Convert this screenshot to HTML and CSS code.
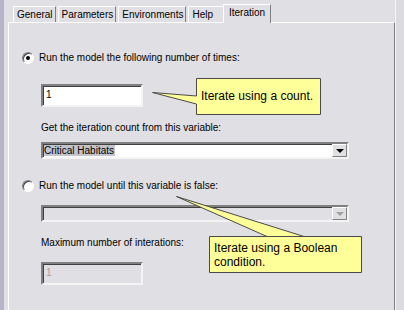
FILE: index.html
```html
<!DOCTYPE html>
<html lang="en">
<head>
    <meta charset="UTF-8">
    <title>Iteration</title>
    <link rel="stylesheet" href="styles.css">
</head>
<body>
    <div class="window">
        <div class="edge"></div>
        <div class="dialog">
            <div class="tabs">
                <div class="tab">General</div>
                <div class="tab">Parameters</div>
                <div class="tab">Environments</div>
                <div class="tab help">Help</div>
                <div class="tab active">Iteration</div>
            </div>
            <div class="panel">
                <div class="option">
                    <span class="radio checked"></span>
                    <span>Run the model the following number of times:</span>
                </div>
                <div class="field">1</div>
                <div class="label">Get the iteration count from this variable:</div>
                <div class="combo">
                    <span class="combo-value"><span class="selected">Critical Habitats</span></span>
                    <span class="combo-btn"><span class="arrow"></span></span>
                </div>

                <div class="option second">
                    <span class="radio"></span>
                    <span>Run the model until this variable is false:</span>
                </div>
                <div class="combo disabled">
                    <span class="combo-value"></span>
                    <span class="combo-btn"><span class="arrow"></span></span>
                </div>
                <div class="label">Maximum number of interations:</div>
                <div class="field disabled">1</div>

                <!-- callouts -->
                <div class="callout count">
                    <svg width="170" height="40" viewBox="0 0 170 40">
                        <path d="M44.5 0.5 H168.5 V36.5 H44.5 V26 L0.5 14.5 L44.5 18 Z" fill="#ffff99" stroke="#4a4a4a"/>
                    </svg>
                    <span class="callout-text">Iterate using a count.</span>
                </div>
                <div class="callout boolean">
                    <svg width="186" height="78" viewBox="0 0 186 78">
                        <path d="M0.5 0.5 L91 40.5 H185.5 V76.5 H33.5 V40.5 H128 Z" fill="#ffff99" stroke="#4a4a4a"/>
                    </svg>
                    <span class="callout-text">Iterate using a Boolean<br>condition.</span>
                </div>
            </div>
        </div>
        <div class="edge-right"></div>
    </div>
</body>
</html>
```

FILE: styles.css
```css
body {
    margin: 0;
    background-color: #e0dfe3;
    font-family: "Liberation Sans", Arial, sans-serif;
    font-size: 10px;
    color: #000;
    overflow: hidden;
}
.window {
    display: flex;
    width: 404px;
    height: 310px;
}
.edge {
    width: 4px;
    background-color: #b5b4c8;
}
.dialog {
    flex: 1;
    padding-left: 4px;
    display: flex;
    flex-direction: column;
}
.edge-right {
    width: 8px;
    border-left: 1px solid #f4f4f6;
    background-color: #dcdbe0;
}
.tabs {
    display: flex;
    align-items: flex-end;
    height: 22px;
    padding-left: 5px;
}
.tab {
    height: 15px;
    line-height: 15px;
    padding: 0 2px 0 3px;
    margin-right: 2px;
    border-top: 1px solid #fff;
    border-left: 1px solid #fff;
    border-right: 1px solid #808080;
    background-color: #e0dfe3;
}
.tab.help {
    padding-right: 10px;
}
.tab.active {
    height: 18px;
    line-height: 16px;
    padding: 0 5px 0 5px;
    margin-left: -3px;
    margin-bottom: -1px;
    position: relative;
    z-index: 1;
}
.panel {
    flex: 1;
    position: relative;
    border-top: 1px solid #fff;
    border-left: 1px solid #fff;
    border-right: 1px solid #808080;
    padding-left: 13px;
}
.option {
    display: flex;
    align-items: center;
    gap: 5px;
    height: 13px;
    margin-top: 28px;
}
.option.second {
    margin-top: 20px;
}
.radio {
    width: 10px;
    height: 10px;
    border-radius: 50%;
    border: 1px solid #808080;
    border-right-color: #fff;
    border-bottom-color: #fff;
    background-color: #fff;
    box-shadow: inset 1px 1px 0 #404040;
    position: relative;
}
.radio.checked::after {
    content: "";
    position: absolute;
    left: 3px;
    top: 3px;
    width: 4px;
    height: 4px;
    border-radius: 50%;
    background-color: #000;
}
.field {
    margin: 20px 0 0 19px;
    width: 94px;
    height: 19px;
    border: 2px solid #808080;
    border-right-color: #f4f4f4;
    border-bottom-color: #f4f4f4;
    box-shadow: inset 1px 1px 0 #404040;
    background-color: #fff;
    line-height: 17px;
    padding-left: 3px;
    padding-right: 1px;
}
.field.disabled {
    margin-top: 13px;
    background-color: #e0dfe3;
    color: #a0a0a0;
}
.label {
    margin: 14px 0 0 19px;
    height: 13px;
    line-height: 13px;
}
.combo {
    margin: 8px 0 0 19px;
    width: 304px;
    height: 13px;
    display: flex;
    border: 2px solid #808080;
    border-right-color: #f4f4f4;
    border-bottom-color: #f4f4f4;
    box-shadow: inset 1px 1px 0 #404040;
    background-color: #fff;
}
.combo.disabled {
    margin-top: 13px;
    background-color: #e0dfe3;
}
.combo-value {
    flex: 1;
    padding: 0 1px;
    line-height: 13px;
}
.selected {
    background-color: #c3c3cb;
    padding-right: 1px;
}
.combo-btn {
    width: 15px;
    display: flex;
    align-items: center;
    justify-content: center;
    background-color: #e0dfe3;
    border-left: 1px solid #fff;
    border-top: 1px solid #fff;
    border-right: 1px solid #808080;
    border-bottom: 1px solid #808080;
    box-sizing: border-box;
    height: 13px;
}
.arrow {
    width: 0;
    height: 0;
    border-left: 4px solid transparent;
    border-right: 4px solid transparent;
    border-top: 4px solid #000;
}
.combo.disabled .arrow {
    border-top-color: #a0a0a0;
}
.callout {
    position: absolute;
}
.callout svg {
    display: block;
}
.callout-text {
    position: absolute;
    font-size: 12px;
    line-height: 14px;
    white-space: nowrap;
}
.callout.count {
    left: 143px;
    top: 55px;
}
.callout.count .callout-text {
    left: 49px;
    top: 11px;
}
.callout.boolean {
    left: 167px;
    top: 173px;
}
.callout.boolean .callout-text {
    left: 38px;
    top: 45px;
}
```
